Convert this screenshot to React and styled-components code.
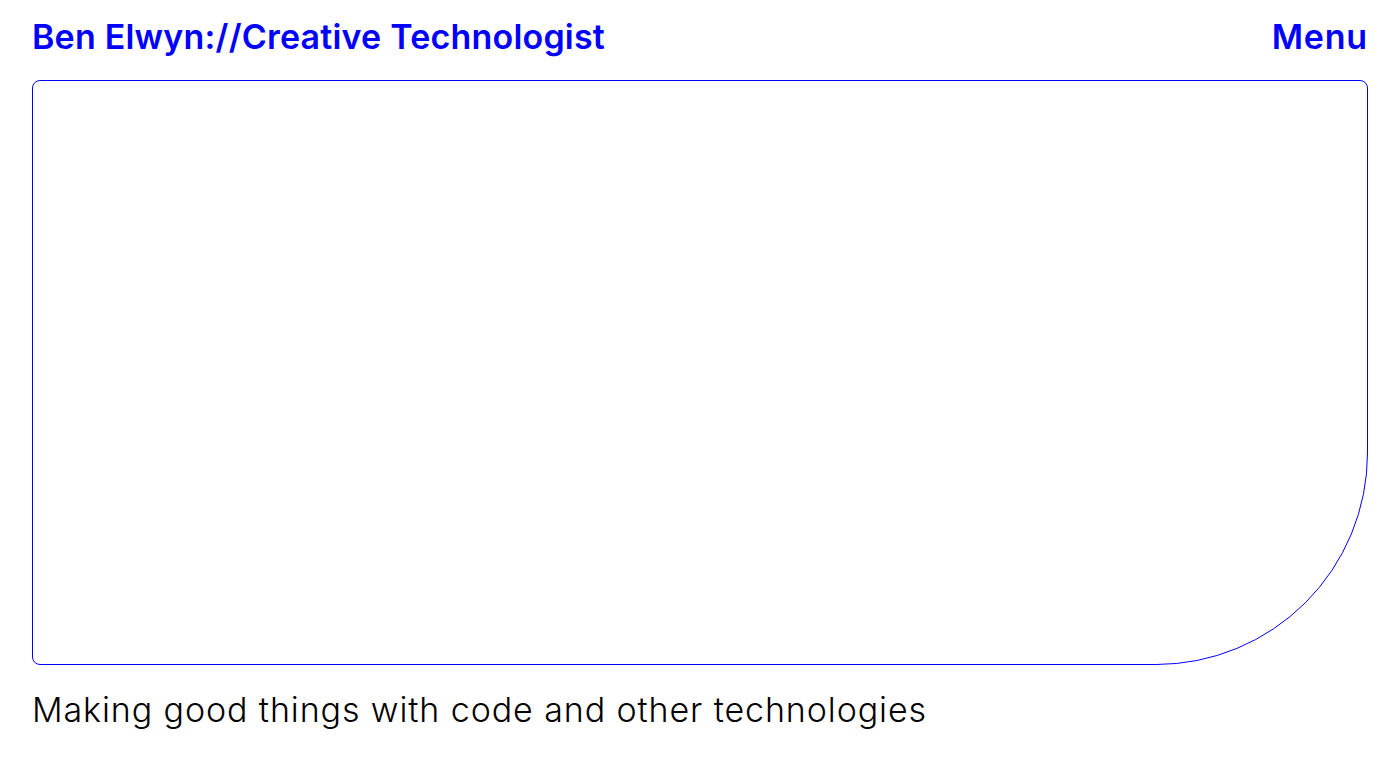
import React from 'react';
import styled, { createGlobalStyle } from 'styled-components';

const GlobalStyle = createGlobalStyle`
  html, body {
    margin: 0;
    padding: 0;
    background: #fff;
  }
  body {
    font-family: Inter, "Liberation Sans", sans-serif;
  }
`;

const Page = styled.div`
  display: flex;
  flex-direction: column;
  height: 761px;
  padding: 14px 32px 0;
  box-sizing: border-box;
`;

const Header = styled.header`
  display: flex;
  align-items: center;
  justify-content: space-between;
  height: 44px;
  margin-bottom: 22px;
`;

const Title = styled.a`
  color: #0000ff;
  font-weight: 600;
  font-size: 34px;
  letter-spacing: 0.2px;
  text-decoration: none;
`;

const MenuButton = styled.button`
  border: none;
  background: none;
  padding: 0;
  color: #0000ff;
  font-family: inherit;
  font-weight: 600;
  font-size: 34px;
  letter-spacing: 0.8px;
  cursor: pointer;
`;

const Stage = styled.div`
  height: 585px;
  border: 1px solid #0000ff;
  border-radius: 8px 8px 212px 8px;
  box-sizing: border-box;
`;

const Tagline = styled.p`
  margin: 24px 0 0;
  font-size: 34px;
  font-weight: 300;
  letter-spacing: 0.9px;
  color: #000;
`;

export default function App() {
  return (
    <>
      <GlobalStyle />
      <Page>
        <Header>
          <Title href="#">Ben Elwyn://Creative Technologist</Title>
          <MenuButton>Menu</MenuButton>
        </Header>
        <Stage />
        <Tagline>Making good things with code and other technologies</Tagline>
      </Page>
    </>
  );
}
